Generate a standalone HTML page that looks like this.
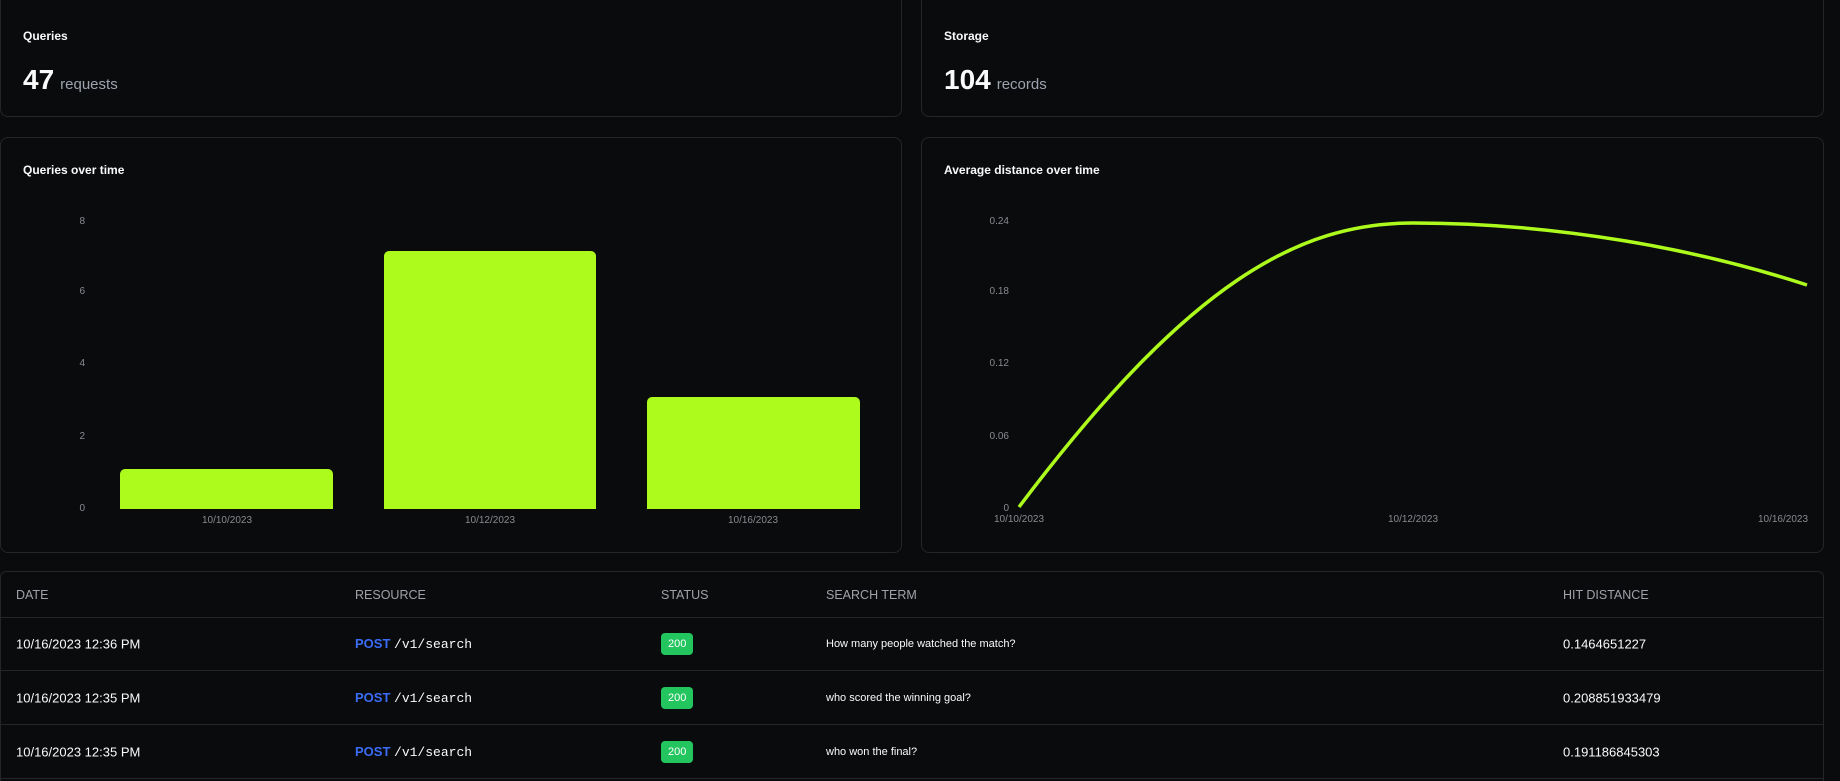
<!DOCTYPE html>
<html style="overflow:hidden;height:781px"><head><meta charset="utf-8"><style>
*{box-sizing:border-box;margin:0;padding:0}
body{width:1840px;height:781px;overflow:hidden;background:#0a0b0d;font-family:"Liberation Sans",sans-serif;color:#fafafa;position:relative}
.card{position:absolute;border:1px solid #25262a;border-radius:8px;background:#0a0b0d}
.t{position:absolute;left:22px;font-size:12px;font-weight:bold;color:#fafafa}
.big{position:absolute;left:22px;font-size:28px;font-weight:bold}
.big span{font-size:15px;font-weight:normal;color:#9ca3af;margin-left:6px}
.tbl{position:absolute;left:0;top:571px;width:1824px;height:212px;border:1px solid #25262a;border-bottom:none;border-radius:6px 6px 0 0;overflow:hidden}
.row{position:absolute;left:0;width:100%;border-bottom:1px solid #25262a}
.c{position:absolute;font-size:13px;top:50%;transform:translateY(-50%);white-space:nowrap}
.h .c{color:#a1a1aa;font-size:12.5px}
.post{color:#3b6cf6;font-weight:bold}
.mono{font-family:"Liberation Mono",monospace;font-size:13px}
.b{display:inline-block;background:#22c55e;color:#fff;font-size:11px;padding:5px 7px;border-radius:4px}
.s{font-size:11px}
</style></head><body>
<div class="card" style="left:0;top:-10px;width:902px;height:127px"><div class="t" style="top:38px">Queries</div><div class="big" style="top:73px">47<span>requests</span></div></div>
<div class="card" style="left:921px;top:-10px;width:903px;height:127px"><div class="t" style="top:38px">Storage</div><div class="big" style="top:73px">104<span>records</span></div></div>
<div class="card" style="left:0;top:137px;width:902px;height:416px"><div class="t" style="top:25px">Queries over time</div></div>
<div class="card" style="left:921px;top:137px;width:903px;height:416px"><div class="t" style="top:25px">Average distance over time</div></div>
<svg style="position:absolute;left:0;top:0" width="1840" height="560" font-family="Liberation Sans" font-size="10" fill="#8a8a90">
<text x="85" y="224" text-anchor="end">8</text><text x="85" y="294" text-anchor="end">6</text><text x="85" y="366" text-anchor="end">4</text><text x="85" y="439" text-anchor="end">2</text><text x="85" y="511" text-anchor="end">0</text>
<path d="M120,509V474a5,5 0 0 1 5,-5H328a5,5 0 0 1 5,5V509Z" fill="#adfa1d"/>
<path d="M384,509V256a5,5 0 0 1 5,-5H591a5,5 0 0 1 5,5V509Z" fill="#adfa1d"/>
<path d="M647,509V402a5,5 0 0 1 5,-5H855a5,5 0 0 1 5,5V509Z" fill="#adfa1d"/>
<text x="227" y="523" text-anchor="middle">10/10/2023</text><text x="490" y="523" text-anchor="middle">10/12/2023</text><text x="753" y="523" text-anchor="middle">10/16/2023</text>
<text x="1009" y="224" text-anchor="end">0.24</text><text x="1009" y="294" text-anchor="end">0.18</text><text x="1009" y="366" text-anchor="end">0.12</text><text x="1009" y="439" text-anchor="end">0.06</text><text x="1009" y="511" text-anchor="end">0</text>
<text x="1019" y="522" text-anchor="middle">10/10/2023</text><text x="1413" y="522" text-anchor="middle">10/12/2023</text><text x="1783" y="522" text-anchor="middle">10/16/2023</text>
<path d="M1019,507C1190,280 1300,223 1413,223C1560,223 1700,250 1807,285" stroke="#adfa1d" stroke-width="3.5" fill="none"/>
</svg>
<div class="tbl">
<div class="row h" style="top:0;height:46px"><div class="c" style="left:15px">DATE</div><div class="c" style="left:354px">RESOURCE</div><div class="c" style="left:660px">STATUS</div><div class="c" style="left:825px">SEARCH TERM</div><div class="c" style="left:1562px">HIT DISTANCE</div></div>
<div class="row" style="top:46px;height:53px"><div class="c" style="left:15px">10/16/2023 12:36 PM</div><div class="c" style="left:354px"><span class="post">POST</span> <span class="mono">/v1/search</span></div><div class="c" style="left:660px"><span class="b">200</span></div><div class="c s" style="left:825px">How many people watched the match?</div><div class="c" style="left:1562px">0.1464651227</div></div>
<div class="row" style="top:99px;height:54px"><div class="c" style="left:15px">10/16/2023 12:35 PM</div><div class="c" style="left:354px"><span class="post">POST</span> <span class="mono">/v1/search</span></div><div class="c" style="left:660px"><span class="b">200</span></div><div class="c s" style="left:825px">who scored the winning goal?</div><div class="c" style="left:1562px">0.208851933479</div></div>
<div class="row" style="top:153px;height:54px"><div class="c" style="left:15px">10/16/2023 12:35 PM</div><div class="c" style="left:354px"><span class="post">POST</span> <span class="mono">/v1/search</span></div><div class="c" style="left:660px"><span class="b">200</span></div><div class="c s" style="left:825px">who won the final?</div><div class="c" style="left:1562px">0.191186845303</div></div>
</div>
</body></html>
